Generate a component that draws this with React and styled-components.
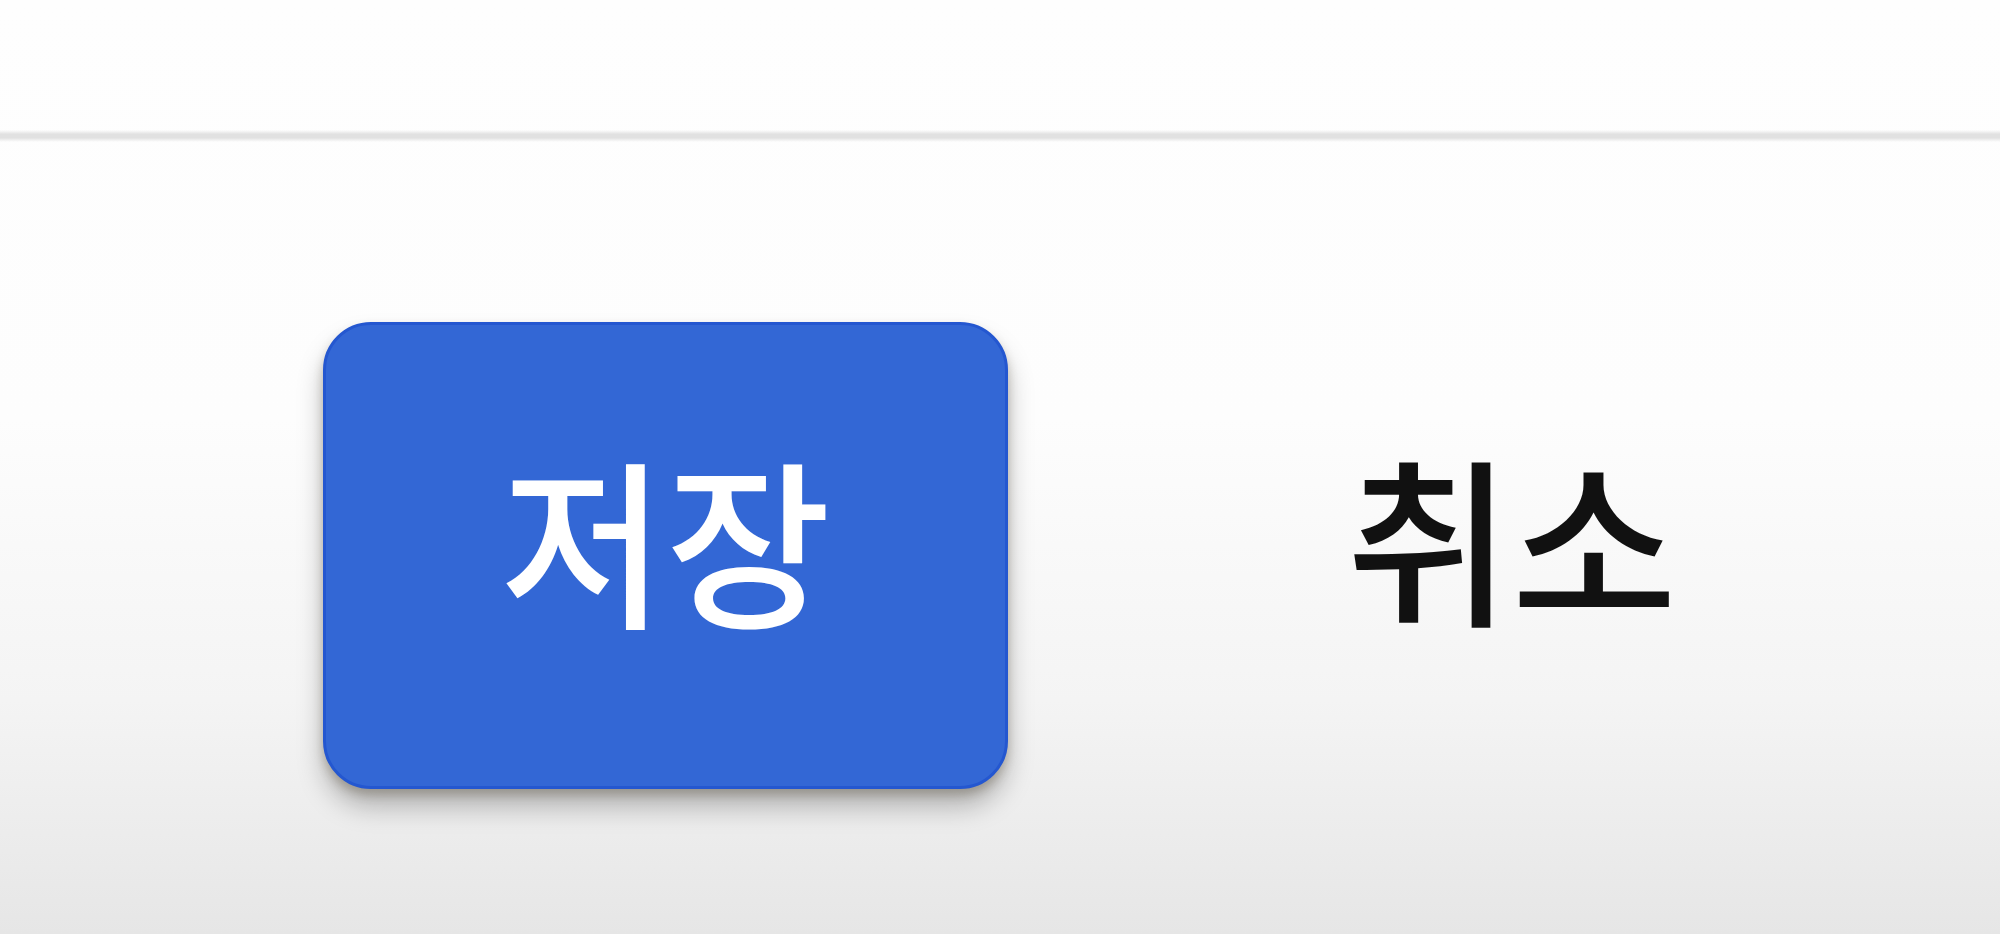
import React from 'react';
import styled, { createGlobalStyle } from 'styled-components';

/* global */
const GlobalStyle = createGlobalStyle`
  html, body {
    margin: 0;
    padding: 0;
  }
  body {
    font-family: "Noto Sans CJK KR", "Noto Sans", sans-serif;
    background: #fff;
  }
`;

const Page = styled.div`
  width: 2000px;
  height: 934px;
  overflow: hidden;
  display: flex;
  flex-direction: column;
  background: linear-gradient(
    to bottom,
    #fefefe 0%,
    #fdfdfd 45%,
    #f4f4f4 75%,
    #e6e6e6 100%
  );
`;

const TopArea = styled.div`
  height: 130px;
  flex-shrink: 0;
`;

const Divider = styled.div`
  height: 12px;
  flex-shrink: 0;
  background: linear-gradient(
    to bottom,
    rgba(225, 225, 225, 0) 0%,
    #e1e1e1 35%,
    #e1e1e1 65%,
    rgba(225, 225, 225, 0) 100%
  );
`;

const Footer = styled.div`
  display: flex;
  align-items: center;
  padding: 180px 0 0 323px;
  gap: 338px;
`;

const Button = styled.button`
  width: 685px;
  height: 467px;
  border: 3px solid #2457d0;
  border-radius: 48px;
  background: #3367d5;
  color: #fff;
  font-family: "Noto Sans CJK KR", "Noto Sans", sans-serif;
  font-size: 180px;
  font-weight: 500;
  line-height: 1;
  padding: 0 0 40px 0;
  display: flex;
  align-items: center;
  justify-content: center;
  box-shadow: 0 18px 26px rgba(0, 0, 0, 0.25), 0 6px 10px rgba(110, 95, 70, 0.3);
  cursor: pointer;
`;

const TextButton = styled.span`
  color: #111;
  font-size: 180px;
  font-weight: 500;
  line-height: 1;
  padding-bottom: 44px;
`;

export default function App() {
  return (
    <>
      <GlobalStyle />
      <Page>
        <TopArea />
        <Divider />
        <Footer>
          <Button>저장</Button>
          <TextButton>취소</TextButton>
        </Footer>
      </Page>
    </>
  );
}
